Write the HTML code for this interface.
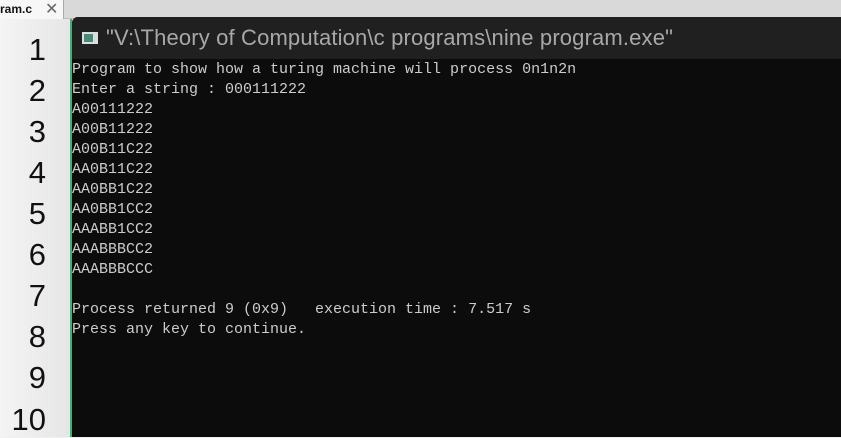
<!DOCTYPE html>
<html><head><style>
body{margin:0;width:841px;height:437px;overflow:hidden;background:#f0f0f0;position:relative;font-family:"Liberation Sans",sans-serif}
.tabbar{position:absolute;left:0;top:0;width:841px;height:18px;background:#d9d9d9;border-bottom:1px solid #bdbdbd}
.tab{position:absolute;left:0;top:0;width:63px;height:19px;background:#f7f7f7;border-right:1px solid #aaa}
.tab span{position:absolute;left:0;top:2px;font-size:12px;font-weight:bold;color:#111}
.tab i{position:absolute;left:45px;top:-1px;font-style:normal;font-size:16px;color:#666}
.gutter{position:absolute;left:0;top:19px;width:70px;height:418px;background:linear-gradient(to right,#f4f4f4,#e6e6e6)}
.num{position:absolute;right:24px;font-size:31px;color:#111;width:60px;text-align:right}
.green{position:absolute;left:70px;top:19px;width:2px;height:418px;background:#3cb371}
.win{position:absolute;left:72px;top:17px;width:769px;height:420px;background:#0c0c0c;border-top-left-radius:6px;overflow:hidden}
.title{height:42px;background:#202020;position:relative}
.title .t{position:absolute;left:34px;top:8px;font-size:22px;color:#a8a8a8;letter-spacing:0.15px}
.icon{position:absolute;left:10px;top:15px;width:16px;height:12px;background:#ddd}
.icon:before{content:"";position:absolute;left:2px;top:2px;width:9px;height:8px;background:#4a8a7a}
pre{margin:0;position:absolute;left:0;top:43px;font-family:"Liberation Mono",monospace;font-size:15px;line-height:20px;color:#cccccc}
</style></head><body>
<div class="tabbar"><div class="tab"><span>ram.c</span><i>✕</i></div></div>
<div class="gutter">
<div class="num" style="top:13px">1</div>
<div class="num" style="top:54px">2</div>
<div class="num" style="top:95px">3</div>
<div class="num" style="top:136px">4</div>
<div class="num" style="top:177px">5</div>
<div class="num" style="top:218px">6</div>
<div class="num" style="top:259px">7</div>
<div class="num" style="top:300px">8</div>
<div class="num" style="top:341px">9</div>
<div class="num" style="top:383px">10</div>
</div>
<div class="green"></div>
<div class="win">
<div class="title"><div class="icon"></div><div class="t">"V:\Theory of Computation\c programs\nine program.exe"</div></div>
<pre>Program to show how a turing machine will process 0n1n2n
Enter a string : 000111222
A00111222
A00B11222
A00B11C22
AA0B11C22
AA0BB1C22
AA0BB1CC2
AAABB1CC2
AAABBBCC2
AAABBBCCC

Process returned 9 (0x9)   execution time : 7.517 s
Press any key to continue.</pre>
</div>
</body></html>
